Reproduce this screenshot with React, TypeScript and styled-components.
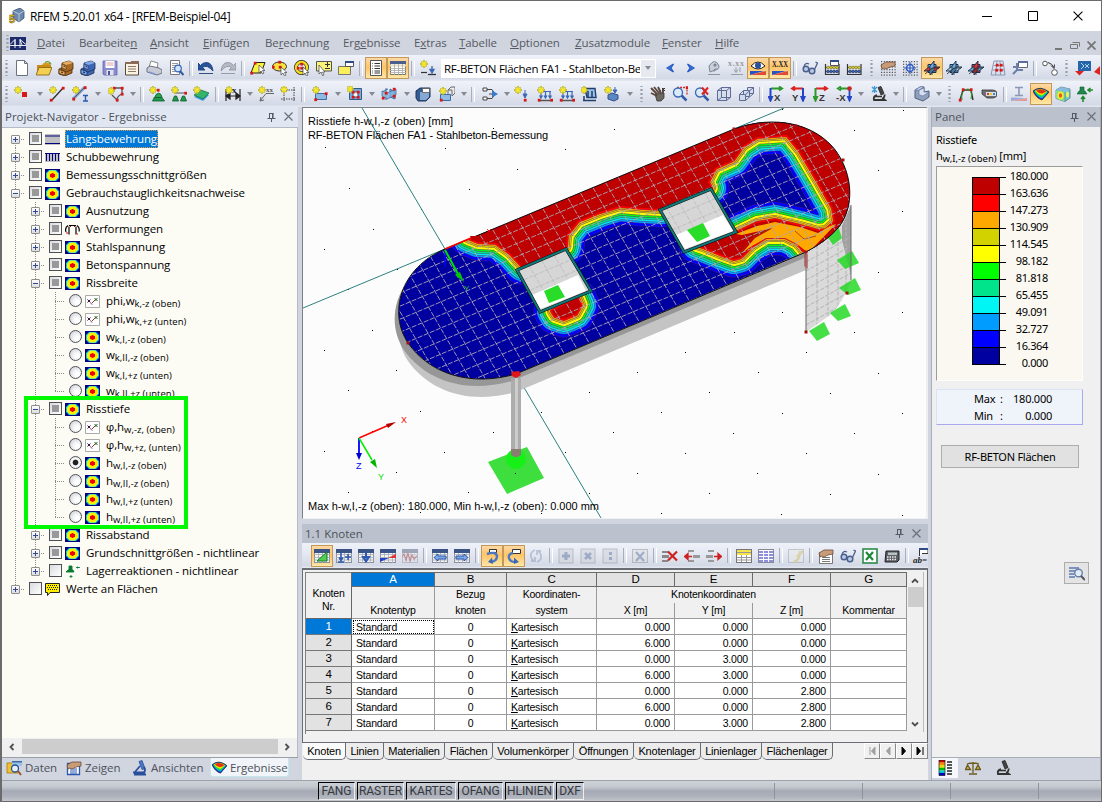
import React from "react";
import styled, { createGlobalStyle, css } from "styled-components";

const ui = `"Open Sans", "Noto Sans", sans-serif`;
const arial = `"Liberation Sans", Arial, sans-serif`;

const Global = createGlobalStyle`
  * { box-sizing: border-box; }
  body { margin: 0; background: #d0d5e0; overflow: hidden; }
  svg { display: block; flex: none; }
`;

const Window = styled.div`
  width: 1102px;
  height: 802px;
  display: flex;
  flex-direction: column;
  border: 1px solid #6b6b6b;
  border-left-width: 2px;
  background: #d0d5e0;
  font: 11.5px ${ui};
  color: #000;
  white-space: nowrap;
  overflow: hidden;
`;

const TitleBar = styled.div`
  height: 30px;
  flex: none;
  display: flex;
  align-items: center;
  background: #fff;
  padding-left: 6px;
`;
const TitleText = styled.div`
  font-size: 12px;
  letter-spacing: -0.31px;
  margin-left: 5px;
  flex: 1;
`;
const CaptionButtons = styled.div`
  display: flex;
  padding-right: 18px;
  gap: 35.5px;
  align-items: center;
`;

const MenuBar = styled.div`
  height: 24px;
  flex: none;
  display: flex;
  align-items: center;
  background: #d0d4de;
  padding-left: 3px;
  color: #555a63;
`;
const MenuGap = styled.div`
  width: 11px;
`;
const MenuItem = styled.div<{ $w: number }>`
  width: ${(p) => p.$w}px;
  font-size: 11.5px;
  line-height: 15px;
  padding-bottom: 1px;
  letter-spacing: -0.08px;
`;
const MdiButtons = styled.div`
  display: flex;
  gap: 7px;
  margin: 5px 5px 0 auto;
`;

const Bar = styled.div<{ $h?: number; $start?: number }>`
  height: ${(p) => p.$h ?? 26}px;
  flex: none;
  display: flex;
  align-items: center;
  padding-left: ${(p) => p.$start ?? 0}px;
  background: linear-gradient(#eff2f9, #e3e7f1 45%, #d3d9e6 90%, #e6e9f0);
  overflow: hidden;
`;
const Grip = styled.div<{ $w: number }>`
  width: ${(p) => p.$w}px;
  flex: none;
  height: 16px;
  background: radial-gradient(circle, #9a9ea8 1px, transparent 1.3px) center / 3px 4px no-repeat;
  background-repeat: no-repeat repeat;
`;
const Sep = styled.div<{ $w: number }>`
  width: ${(p) => p.$w}px;
  flex: none;
  display: flex;
  justify-content: center;
  &::after {
    content: "";
    width: 2px;
    height: 15px;
    border-left: 1px solid #a9aebb;
    border-right: 1px solid #fff;
  }
`;
const Drop = styled.div<{ $w: number }>`
  width: ${(p) => p.$w}px;
  flex: none;
  display: flex;
  justify-content: center;
  &::after {
    content: "";
    border: 3.5px solid transparent;
    border-top: 4px solid #858a93;
    border-bottom: 0;
  }
`;
const Tool = styled.div<{ $w: number; $on?: boolean; $dim?: boolean }>`
  width: ${(p) => p.$w}px;
  height: 22px;
  flex: none;
  display: flex;
  align-items: center;
  justify-content: center;
  ${(p) => p.$dim && css`svg { opacity: 0.45; filter: saturate(0.6); }`}
  ${(p) =>
    p.$on &&
    css`
      border: 1px solid #c2995a;
      background: linear-gradient(#fdd9a6, #ffc468 45%, #ffe7a6);
    `}
`;
const Combo = styled.div`
  width: 215px;
  height: 19px;
  margin: 0 4px 0 2px;
  flex: none;
  display: flex;
  background: #fff;
  align-items: center;
  padding-left: 3px;
`;
const ComboText = styled.div`
  width: 196px;
  margin-right: 1px;
  overflow: hidden;
  font-size: 11.5px;
  letter-spacing: -0.28px;
`;
const ComboArrow = styled.div`
  width: 14px;
  height: 17px;
  background: #e6e9f0;
  display: flex;
  align-items: center;
  justify-content: center;
`;

const Main = styled.div`
  flex: 1;
  display: flex;
  min-height: 0;
`;

const Nav = styled.div`
  width: 296px;
  flex: none;
  display: flex;
  flex-direction: column;
`;
const PanelHead = styled.div<{ $bg: string; $h: number; $pr?: number }>`
  height: ${(p) => p.$h}px;
  flex: none;
  display: flex;
  align-items: center;
  background: ${(p) => p.$bg};
  padding: 0 ${(p) => p.$pr ?? 4}px 1px 3px;
  font-size: 11.5px;
  color: #4d525b;
  letter-spacing: 0;
  gap: 8px;
`;
const Grow = styled.div`
  flex: 1;
`;
const TreeArea = styled.div`
  position: relative;
  flex: 1;
  min-height: 0;
  background: #fcfbf4;
  border-top: 1px solid #b5bac6;
  border-right: 1px solid #b5bac6;
  padding: 2px 0 0 3px;
`;
const Row = styled.div`
  height: 18px;
  display: flex;
  align-items: center;
`;
const Guide = styled.div<{ $v: "full" | "half" | "lower"; $h?: boolean }>`
  width: 20px;
  height: 18px;
  flex: none;
  display: flex;
  align-items: center;
  padding: 1px 0 0 6px;
  background:
    repeating-linear-gradient(#8a8a8a 0 1px, transparent 1px 2px) 10px ${(p) => (p.$v === "lower" ? "9px" : "0")} / 1px
      ${(p) => (p.$v === "full" ? "18px" : "10px")} no-repeat,
    ${(p) =>
      p.$h
        ? `repeating-linear-gradient(90deg, #8a8a8a 0 1px, transparent 1px 2px) 10px 9px / 14px 1px no-repeat`
        : "linear-gradient(transparent, transparent)"};
`;
const Expander = styled.div<{ $open?: boolean }>`
  width: 9px;
  height: 9px;
  border: 1px solid #8f8f8f;
  border-radius: 1px;
  background:
    linear-gradient(#2d489b, #2d489b) center / 5px 1px no-repeat,
    linear-gradient(#2d489b, #2d489b) center / ${(p) => (p.$open ? "0 0" : "1px 5px")} no-repeat,
    linear-gradient(#fff, #dcdcdc);
`;
const Check = styled.div<{ $filled?: boolean }>`
  width: 13px;
  height: 13px;
  flex: none;
  margin: -1px 3px 0 4px;
  border: 1px solid #4f5053;
  padding: 2px;
  background: linear-gradient(135deg, #d9dbe0, #fff);
  &::after {
    content: "";
    display: block;
    width: 7px;
    height: 7px;
    background: ${(p) => (p.$filled ? "#999" : "transparent")};
  }
`;
const Radio = styled.div<{ $on?: boolean }>`
  width: 13px;
  height: 13px;
  flex: none;
  margin: -1px 3px 0 4px;
  border: 1px solid #505256;
  border-radius: 50%;
  background: ${(p) =>
    p.$on
      ? "radial-gradient(circle, #222 0 2.4px, #fff 3.3px, #dfe2e6 6px)"
      : "radial-gradient(circle at 65% 65%, #fff 2px, #d3d7de 8px)"};
`;
const Label = styled.div<{ $sel?: boolean }>`
  margin-left: 5px;
  height: 18px;
  line-height: 17px;
  padding: 0 1px;
  font-size: 11.5px;
  letter-spacing: -0.08px;
  ${(p) => p.$sel && css`background: #0078d7; color: #fff; outline: 1px dotted #e49a4c; outline-offset: -1px;`}
`;
const Sub = styled.span`
  font-size: 9.5px;
  letter-spacing: 0.02px;
  position: relative;
  top: 2px;
`;
const Highlight = styled.div`
  position: absolute;
  left: 22px;
  top: 268px;
  width: 164px;
  height: 133px;
  border: 4px solid #00f800;
`;
const HScroll = styled.div`
  height: 19px;
  flex: none;
  display: flex;
  align-items: center;
  justify-content: space-between;
  background: #f0f0f0;
  border-right: 1px solid #b5bac6;
  padding: 0 6px 2px 6px;
`;
const HThumb = styled.div`
  width: 256px;
  height: 15px;
  background: #cdcdcd;
`;
const NavTabs = styled.div`
  height: 23px;
  flex: none;
  display: flex;
  border-top: 1px solid #9a9fa9;
  padding-left: 1px;
`;
const NavTab = styled.div<{ $w: number; $on?: boolean }>`
  width: ${(p) => p.$w}px;
  height: 19px;
  display: flex;
  align-items: center;
  gap: 3px;
  padding-left: 3px;
  color: #4d525b;
  letter-spacing: -0.05px;
  ${(p) => p.$on && css`background: #f1f4f8; border-radius: 0 0 3px 3px; border: 1px solid #c4e6ee; border-top: 0; padding-left: 1px;`}
`;

const Center = styled.div`
  width: 626px;
  margin-left: 4px;
  flex: none;
  display: flex;
  flex-direction: column;
`;
const View = styled.div`
  height: 412px;
  border: 1px solid #7b7f88;
  border-right: 2px solid #eef0f4;
  border-bottom: 1px solid #eef0f4;
  background: #fcfcfc;
`;
const TableHead = styled.div`
  margin-top: 5px;
`;
const Grid = styled.div`
  height: 175px;
  flex: none;
  border: 1px solid #6a6d74;
  border-top-width: 2px;
  background: #f0f0f0;
  padding: 2px 0 0 2px;
  display: flex;
  font: 10.5px ${arial};
`;
const Table = styled.div`
  width: 602px;
  height: 162px;
  display: grid;
  grid-template-columns: 46px 83px 72px 90px 78px 78px 78px 76px;
  grid-template-rows: 15px 16px 16px repeat(7, 16px);
  border-left: 1px solid #808080;
`;
const Cell = styled.div<{ $a?: string; $k?: "letter" | "head" | "num" | "sel" }>`
  border-right: 1px solid #9a9a9a;
  border-bottom: 1px solid #9a9a9a;
  background: #fff;
  text-align: ${(p) => p.$a ?? "left"};
  padding: 0 4px;
  line-height: 17px;
  height: 16px;
  letter-spacing: -0.2px;
  ${(p) => p.$k === "letter" && css`background: #e2e2e2; border: 1px solid #6a6a6a; border-left: 0; height: 15px; line-height: 13px; text-align: center; font-size: 11.5px;`}
  ${(p) => p.$k === "num" && css`background: #e2e2e2; text-align: center; line-height: 15px; font-size: 11.5px; border-bottom-color: #777; border-right-color: #666;`}
  ${(p) => p.$k === "sel" && css`outline: 1px dotted #000; outline-offset: -2px;`}
  ${(p) => p.$k === "head" && css`background: #f0f0f0; border-bottom: 0; text-align: center; padding: 0 1px; line-height: 14px;`}
`;
const Corner = styled(Cell)`
  grid-row: 1 / span 3;
  height: 47px;
  line-height: 13px;
  padding-top: 14px;
  text-align: center;
  background: #f0f0f0;
  border-top: 1px solid #808080;
  border-right-color: #666;
  border-bottom-color: #666;
`;
const Blue = styled(Cell)`
  background: #0078d7;
  color: #fff;
`;
const KoordHead = styled(Cell)`
  grid-column: span 3;
`;
const HeadBottom = styled(Cell)`
  border-bottom: 1px solid #9a9a9a;
`;
const VScroll = styled.div`
  width: 17px;
  height: 160px;
  display: flex;
  flex-direction: column;
  align-items: center;
  justify-content: space-between;
  padding: 5px 0 4px;
  border-right: 1px solid #bbb;
`;
const VThumb = styled.div`
  width: 15px;
  height: 20px;
  background: #cdcdcd;
  margin: -112px 0 0;
`;
const SheetTabs = styled.div`
  height: 19px;
  flex: none;
  display: flex;
  background: #f0f0f0;
  padding-left: 1px;
  font: 11px ${arial};
  letter-spacing: -0.2px;
`;
const Sheet = styled.div<{ $w: number; $on?: boolean }>`
  width: ${(p) => p.$w}px;
  height: 17px;
  line-height: 17px;
  text-align: center;
  border: 1px solid #6a6d74;
  border-top: 0;
  border-left: 0;
  border-radius: 0 0 5px 5px;
  background: ${(p) => (p.$on ? "#fafafa" : "#ececec")};
`;
const PageButton = styled.div`
  width: 16px;
  height: 16px;
  background: #f0f0f0;
  border: 1px solid;
  border-color: #fff #8a8a8a #8a8a8a #fff;
  display: flex;
  align-items: center;
  justify-content: center;
`;
const Filler = styled.div`
  flex: 1;
  background: #f0f0f0;
`;

const Side = styled.div`
  flex: 1;
  margin-left: 3px;
  display: flex;
  flex-direction: column;
  background: #f0f0f0;
  border-left: 1px solid #a9adb7;
  border-right: 1px solid #a9adb7;
`;
const SideBody = styled.div`
  flex: 1;
  padding: 5px 4px 0 4px;
  font: 11px "Noto Sans", ${ui};
  letter-spacing: -0.25px;
`;
const SideLine = styled.div`
  height: 16px;
  line-height: 16px;
`;
const Legend = styled.div`
  width: 147px;
  height: 215px;
  margin-top: 2px;
  background: #faf8f0;
  border: 1px solid #9b9b9b;
  border-right-color: #fff;
  border-bottom-color: #fff;
  display: flex;
  padding: 10px 0 0 35px;
`;
const Swatches = styled.div`
  border: 1px solid #000;
  width: 28px;
  height: 188px;
`;
const Swatch = styled.div<{ $c: string }>`
  height: 17px;
  width: 26px;
  background: ${(p) => p.$c};
  border-bottom: 1px solid #000;
  position: relative;
  &::after {
    content: "";
    position: absolute;
    left: 26px;
    top: 16px;
    width: 7px;
    height: 1px;
    background: #000;
  }
  &:first-child::before {
    content: "";
    position: absolute;
    left: 26px;
    top: -1px;
    width: 7px;
    height: 1px;
    background: #000;
  }
`;
const Values = styled.div`
  width: 48px;
  margin-top: -10px;
  text-align: right;
  letter-spacing: -0.35px;
`;
const Value = styled.div`
  height: 17px;
  line-height: 17px;
`;
const MinMax = styled.div`
  width: 147px;
  height: 36px;
  margin-top: 8px;
  padding: 1px 30px 0 37px;
  background: #eff3fa;
  border: 1px solid #dbe3f3;
  border-right-color: #a9a9f0;
  border-bottom-color: #a9a9f0;
`;
const MinMaxRow = styled.div`
  display: flex;
  height: 17px;
  line-height: 16px;
  span:first-child { width: 26px; }
  span:last-child { flex: 1; text-align: right; }
`;
const PushButton = styled.div`
  width: 138px;
  height: 23px;
  margin: 20px 0 0 5px;
  border: 1px solid #adadad;
  background: #e1e1e1;
  text-align: center;
  line-height: 21px;
`;
const DetailButton = styled.div`
  width: 25px;
  height: 22px;
  margin: 94px 0 0 128px;
  border: 1px solid #adadad;
  background: #e4e4e4;
  display: flex;
  align-items: center;
  justify-content: center;
`;
const SideTabs = styled.div`
  height: 23px;
  flex: none;
  display: flex;
  align-items: flex-start;
  background: #d0d5e0;
  border-top: 1px solid #a9adb7;
`;
const SideTab = styled.div<{ $on?: boolean }>`
  width: ${(p) => (p.$on ? 26 : 30)}px;
  height: 20px;
  display: flex;
  align-items: center;
  justify-content: center;
  background: ${(p) => (p.$on ? "#f6f8fb" : "transparent")};
`;

const Status = styled.div`
  height: 21px;
  flex: none;
  display: flex;
  background: linear-gradient(#ced2d9, #c3c7ce 30%, #a6aab4 50%, #adb1bb 75%, #c2c5cc);
  border-top: 1px solid #9da1aa;
  padding-left: 316px;
  font: 12px Roboto, ${arial};
  letter-spacing: -0.1px;
  color: #35383e;
`;
const StatusCell = styled.div<{ $w: number }>`
  width: ${(p) => p.$w}px;
  height: 18px;
  margin: 1px 2px 0 0;
  line-height: 17px;
  text-align: center;
  border: 1px solid #000;
  border-right-color: #eee;
  border-bottom-color: #eee;
`;
const StatusTick = styled.div<{ $w: number }>`
  width: ${(p) => p.$w}px;
  height: 16px;
  margin-top: 2px;
  border-right: 1px solid #8f939c;
`;

/* ---------- icons ---------- */

const star = (x = 4, y = 4) => (
  <g key={`s${x}-${y}`}>
    <path
      d={`M${x} ${y - 4}v8M${x - 4} ${y}h8M${x - 2.5} ${y - 2.5}l5 5M${x + 2.5} ${y - 2.5}l-5 5`}
      stroke="#a79a1a"
      strokeWidth="1.5"
    />
    <path
      d={`M${x} ${y - 3.4}v6.800M${x - 3.4} ${y}h6.800M${x - 2} ${y - 2}l4 4M${x + 2} ${y - 2}l-4 4`}
      stroke="#f6ea2c"
      strokeWidth="1.100"
    />
  </g>
);
const dot = (x: number, y: number, c = "#d81818") => <rect key={`${x}-${y}`} x={x - 1.2} y={y - 1.2} width="2.8" height="2.8" fill={c} />;
const tableBase = (
  <>
    <rect x=".5" y="2.5" width="15" height="12" fill="#f4f4f4" stroke="#8a8f99" />
    <path d="M0 6.5h16M0 9.5h16M0 12h16M4.5 3v12M8.5 3v12M12.5 3v12" stroke="#a5aab4" strokeWidth=".8" />
    <path d="M0 1h16v4H0z" fill="#3a5488" />
  </>
);
const gridDots = Array.from({ length: 36 }, (_, i) => (
  <rect key={i} x={1 + (i % 6) * 2.7} y={1 + Math.floor(i / 6) * 2.7} width="1.2" height="1.2" fill="#555" />
));
const planes = (front: string, flat: string) => (
  <>
    <path d="M4 4.500h8v8H4z" fill={front} stroke="#16324f" />
    <path d="M0 11l5-4h11l-5 4z" fill={flat} stroke="#16324f" strokeWidth=".9" />
    <path d="M6 6l4-5v9l-4 5z" fill={front} stroke="#16324f" strokeWidth=".9" />
    <path d="M8 8h7M8 8v7M8 8L1 14" stroke="#222" strokeWidth=".8" />
  </>
);
const cabinet = (a: string, b: string, c: string) => (
  <>
    <path d="M1 9l7-3 6 2v5l-7 3-6-2z" fill={b} stroke={c} strokeWidth=".8" />
    <path d="M4 3l7-2 4 2v6l-7 3-4-2z" fill={b} stroke={c} strokeWidth=".8" />
    <path d="M4 3l7-2 4 2-7 2z" fill={a} />
    <path d="M4 4l4 1.500v4L4 8z" fill={a} stroke={c} strokeWidth=".6" />
    <path d="M1 9.500l6 2v4l-6-2z" fill={a} stroke={c} strokeWidth=".8" />
    <path d="M3 12l2 .7M5.500 6l1.500.5" stroke={c} strokeWidth="1.300" />
  </>
);
const axisIcon = (label: string, flip: boolean, h: string, v: string) => (
  <>
    <path d={flip ? "M13 2.500H3M5 .5L2 2.500l3 2" : "M3 2.500h10M11 .5l3 2-3 2"} stroke={h} strokeWidth="2" />
    <path d={flip ? "M13 2v11M11.500 11l1.500 3.500 1.500-3.500z" : "M2.500 2v11M1 11l1.500 3.500L4 11z"} stroke={v} strokeWidth="2" fill={v} />
    <text x={flip ? 2 : 6} y="14.500" fontSize="9.500" fontWeight="bold" fontFamily="Liberation Sans" fill="#333" stroke="none">
      {label}
    </text>
  </>
);
const abacus = (
  <>
    <path d="M1.500 4v11M15 4v11M1 14.500h14.500" stroke="#333" strokeWidth="1.200" />
    <path d="M2 7.500h13M2 11.500h13" stroke="#555" />
    {[4, 7, 10, 13].map((x) => (
      <React.Fragment key={x}>
        <circle cx={x} cy="7.500" r="1.400" fill="#e3d21a" stroke="#554" strokeWidth=".5" />
        <circle cx={x} cy="11.500" r="1.400" fill="#3b68b5" stroke="#224" strokeWidth=".5" />
      </React.Fragment>
    ))}
  </>
);
const lens = (
  <>
    <path d="M9.500 9.500l5 5" stroke="#2e5ca8" strokeWidth="2.500" />
    <circle cx="6" cy="6.500" r="4.500" fill="#d7ebfb" fillOpacity=".8" stroke="#3b68b5" strokeWidth="1.300" />
  </>
);
const hand = <path d="M1 5l5-3 9 0v4l-5 1-4 2-2-1-2 1z" fill="#c99c78" stroke="#6b4a36" strokeWidth=".8" />;
const rainbow = (
  <>
    <path d="M0 5q7-6 16 1l-7 8q-6-2-9-9z" fill="#1030c8" />
    <path d="M1 5q7-5 14 1l-6 6.500q-5-1.500-8-7.500z" fill="#0bd" />
    <path d="M1.500 5q6-4.500 13 .8l-5.500 5.200q-5-1.500-7.500-6z" fill="#2d3" />
    <path d="M2 4.800q6-4 12 .8L9 9.500Q4.500 8.500 2 4.800z" fill="#ee0" />
    <path d="M3 4.500q5-3 10.500 1L9 7.800Q5 7 3 4.500z" fill="#e53010" />
    <path d="M0 5q7-6 16 1l-7 8q-6-2-9-9z" stroke="#223" strokeWidth=".7" />
  </>
);
const loads = (
  <>
    <path d="M3 5.500h11M4 6v5M8.500 6v5M13 6v5M2.500 9.500L4 12l1.500-2.500M7 9.500L8.500 12 10 9.500M11.500 9.500L13 12l1.500-2.500" stroke="#3b68b5" strokeWidth="1.200" />
    <path d="M2 14.500h13" stroke="#555" strokeWidth="1.500" />
    {dot(2, 14)}
    {dot(14.500, 14)}
    {star(4, 4)}
  </>
);
const member = (
  <>
    <path d="M5 2v12M1 6l6-3M9 3l5 3v7l-5-2z" stroke="#3c6ea5" fill="#7fb2dd" />
    <path d="M1 5l5 2 9-4v6l-9 4-5-3z" fill="#7fb2dd" fillOpacity=".8" stroke="#3c6ea5" strokeWidth=".8" />
    {dot(2, 12)}
    {dot(13, 3)}
    {dot(5, 7)}
    {dot(13, 10)}
  </>
);
const microscope = (
  <>
    <path d="M7 1.500l3-1 3 7-3 1.500z" fill="#444" stroke="#222" strokeWidth=".8" />
    <path d="M6 9q-4 1-3 5h11l-2-1.500q2-2 1.500-4" stroke="#333" strokeWidth="1.800" />
    <path d="M4 10.500h7" stroke="#333" strokeWidth="1.600" />
  </>
);

const icons: Record<string, React.ReactNode> = {
  page: <path d="M2.500.5h8l3 3v12h-11zM10.500.5v3h3" fill="#fff" stroke="#6d7280" />,
  open: (
    <>
      <path d="M1 5h5l1.500-2H14v4H1z" fill="#d99b1c" />
      <path d="M1 5v10l2-7h12V5" fill="#c98a18" />
      <path d="M0 15l3-7.500h13L13 15z" fill="#f3d052" stroke="#8c6a15" strokeWidth=".9" />
      <path d="M9 2.500q4-2.500 6 2" stroke="#5a9a3a" strokeWidth="1.300" />
    </>
  ),
  cabBrown: cabinet("#e3ac62", "#a86a25", "#4e2f10"),
  cabBlue: cabinet("#7fa8e6", "#3c66b4", "#1b2e5a"),
  save: (
    <>
      <path d="M1 1h14v14H2l-1-1z" fill="#8a8cd0" stroke="#6668a8" strokeWidth=".8" />
      <path d="M3.500 1h9v7h-9z" fill="#fff" />
      <path d="M4.500 3h7M4.500 5h7" stroke="#e0a0a0" />
      <path d="M4.500 10h7v5h-7z" fill="#e2e2ea" />
      <path d="M6 11h2v4H6z" fill="#54568f" />
    </>
  ),
  note: (
    <>
      <path d="M1.500 2.500h13v12.500h-13z" fill="#fbf3df" stroke="#5a4a40" />
      <path d="M1 2h6v-1h8v3H1z" fill="#8a6c58" />
      <path d="M4 6.500h8M4 9h8M4 11.500h8" stroke="#8a7a70" />
    </>
  ),
  print: (
    <>
      <path d="M3 7l2-6 7 2-1 6z" fill="#fff" stroke="#888" />
      <path d="M1 8l3-2 9 2 3 2v3l-5 2-10-3z" fill="#c9ccd6" stroke="#6d7280" />
      <path d="M3 12l6 2" stroke="#7d9bd0" strokeWidth="1.500" />
    </>
  ),
  preview: (
    <>
      <path d="M2.500.5h9v14h-9z" fill="#fff" stroke="#777" />
      <path d="M4 3.500h6M4 5.500h6M4 7.500h3M4 9.500h3M4 11.500h3" stroke="#999" />
      <circle cx="10" cy="8.500" r="3.300" fill="#cfe6fa" stroke="#3b68b5" strokeWidth="1.200" />
      <path d="M12 11l3.500 4" stroke="#2e5ca8" strokeWidth="2" />
    </>
  ),
  undo: <path d="M0 3v7h7L4.500 7.500Q9 4 15 11 14 2 7.500 2.500 4.500 3 2.500 5.500zM1 13.500h14" fill="#27549b" stroke="#1c3f7a" strokeWidth=".9" />,
  redo: <path d="M16 3v7H9l2.500-2.500Q7 4 1 11 2 2 8.500 2.500q3 .5 5 3zM1 13.500h14" fill="#b4b9c4" stroke="#8f95a2" strokeWidth=".9" />,
  para: (
    <>
      <path d="M5 2.500h10L11 13H1z" fill="#fbf23c" stroke="#222" />
      <path d="M9 5v8l2-2 1.500 3 1.500-1-1.500-2.500H15z" fill="#fff" stroke="#444" strokeWidth=".7" />
      {dot(5, 3)}{dot(1.500, 13)}
    </>
  ),
  ell: (
    <>
      <ellipse cx="7.500" cy="6.500" rx="7" ry="4.500" fill="#fbe23c" stroke="#333" />
      {dot(7.500, 2)}{dot(1, 7)}{dot(8, 7)}
      <path d="M9 7v8l2-2 1.500 3 1.500-1-1.500-2.500H15z" fill="#fff" stroke="#444" strokeWidth=".7" />
    </>
  ),
  ring: (
    <>
      <circle cx="7.500" cy="7.500" r="5.500" stroke="#222" strokeWidth="3.800" />
      <circle cx="7.500" cy="7.500" r="5.500" stroke="#f5e01a" strokeWidth="2.400" />
      {dot(7.500, 4)}{dot(7.500, 8)}{dot(4, 8)}
      <path d="M9 7v8l2-2 1.500 3 1.500-1-1.500-2.500H15z" fill="#fff" stroke="#444" strokeWidth=".7" />
    </>
  ),
  rectpm: (
    <>
      <path d="M.5 1.500h15v9.500H.5z" fill="#fbf27a" stroke="#555" />
      <path d="M9 4.500h5M11.500 2v5M9 8.500h5" stroke="#333" />
      <path d="M3 5v9l2-2 1.500 3.500L8 15l-1.500-3H9z" fill="#fff" stroke="#444" strokeWidth=".7" />
    </>
  ),
  wins: (
    <>
      <path d="M.5 6.500h12v8H.5z" fill="#fbee5c" stroke="#777" />
      <path d="M7.500 1.500h8v5h-8z" fill="#fff" stroke="#555" />
      <path d="M7 1h9v2H7z" fill="#2f4c86" />
    </>
  ),
  list: (
    <>
      <path d="M2.500.5h11v15h-11z" fill="#fff" stroke="#555" />
      <path d="M4 3.500h1M4 6h1M4 8.500h1M4 11h1M4 13h1" stroke="#777" strokeWidth="1.200" />
      <path d="M6.500 3.500h5.500M6.500 6h5.500M6.500 8.500h5.500M6.500 11h5.500M6.500 13h5.500" stroke="#333" />
    </>
  ),
  table: (
    <>
      <path d="M.5 1.500h15v13H.5z" fill="#fff" stroke="#776" />
      <path d="M0 1h16v3H0z" fill="#4a5f8e" />
      <path d="M0 4.500h16v2H0z" fill="#e9dcc0" />
      <path d="M0 8.500h16M0 10.500h16M0 12.500h16M4.500 4v11M8.500 4v11M12.500 4v11" stroke="#aaa" strokeWidth=".8" />
    </>
  ),
  loadStar: (
    <>
      <path d="M8 14.500h8" stroke="#333" strokeWidth="1.300" />
      <path d="M12 6v5M10 9.500l2 3.500 2-3.500z" stroke="#3b68b5" fill="#3b68b5" strokeWidth="1.300" />
      <path d="M1 12.500h6" stroke="#333" strokeWidth="1.200" />
      {star(4, 4)}
    </>
  ),
  prev: <path d="M11.500 4L5 8l6.500 4L9 8z" fill="#3b78e0" stroke="#2a5cc4" strokeWidth="1.200" />,
  next: <path d="M4.500 4L11 8l-6.500 4L7 8z" fill="#3b78e0" stroke="#2a5cc4" strokeWidth="1.200" />,
  eyeGrey: (
    <>
      <path d="M2 14.500h12M8 11l-3-2h6z" stroke="#8d93a0" strokeWidth="1.200" />
      <path d="M3 6q6-9 10 0 0 4-4 3-1 2-5 3z" fill="#c9ced9" stroke="#7b8596" />
      <circle cx="9" cy="5" r="1.600" fill="#7b8596" />
    </>
  ),
  xxGrey: (
    <>
      <text x="0" y="5.500" fontSize="8" fontFamily="Liberation Serif" fontWeight="bold" fill="#999" textLength="16">x.xx</text>
      <path d="M3 14.500h12M8 7v5M6 9.500l2 3 2-3M12 7v5" stroke="#9a9faa" />
    </>
  ),
  eye: (
    <>
      <path d="M0 15L16 11v4z" fill="#e04a3a" />
      <path d="M0 11h14L0 15z" fill="#2b50c0" />
      <path d="M1 6q7-8 14 0-7 6-14 0z" fill="#fff" stroke="#222" />
      <circle cx="8" cy="5.500" r="3" fill="#28509c" />
    </>
  ),
  xx: (
    <>
      <text x="0" y="7" fontSize="9" fontFamily="Liberation Serif" fontWeight="bold" fill="#222" textLength="16" lengthAdjust="spacingAndGlyphs">X.XX</text>
      <path d="M0 15L16 11v4z" fill="#e04a3a" />
      <path d="M0 11h14L0 15z" fill="#2b50c0" />
    </>
  ),
  glasses: (
    <>
      <circle cx="4" cy="9" r="2.800" stroke="#4b5f8c" strokeWidth="1.500" fill="#b8c8e6" />
      <circle cx="10" cy="11" r="2.800" stroke="#4b5f8c" strokeWidth="1.500" fill="#b8c8e6" />
      <path d="M2 7q1-5 5-3M12.500 9.500L15.500 3l-2-1" stroke="#4b5f8c" strokeWidth="1.300" />
    </>
  ),
  abacus,
  abacusWin: (
    <>
      {abacus}
      <path d="M6.500.5h8v5h-8z" fill="#fff" stroke="#555" />
      <path d="M6 0h9v2H6z" fill="#2f4c86" />
    </>
  ),
  handGrid: <>{gridDots}{hand}</>,
  target: (
    <>
      {gridDots}
      <circle cx="8" cy="8" r="3.300" stroke="#2b58c0" fill="#dfe8fa" strokeWidth="1.300" />
      <path d="M8 2v12M2 8h12" stroke="#2b58c0" strokeWidth="1.200" />
    </>
  ),
  pl1: planes("#6fa9dd", "#e33030"),
  pl2: planes("#6fa9dd", "#a9cdec"),
  pl3: planes("#e33030", "#6fa9dd"),
  redGrid: (
    <>
      <path d="M4 1h9l2 14H1zM3.500 5.500h10.500M2.500 10h12M7 1L5.500 15M10 1l.5 14" stroke="#8a97b5" />
      {dot(7, 5)}{dot(11, 5)}{dot(6.500, 10)}{dot(11, 10)}
    </>
  ),
  winAxis: (
    <>
      <path d="M6.500 1.500h9v6h-9z" fill="#fff" stroke="#667" />
      <path d="M6 1h10v2H6z" fill="#5b6f9c" />
      <path d="M1 7h4V3M5 7v3l-4 4M5 10h6" stroke="#6b7fac" strokeWidth="2" />
    </>
  ),
  shapes: (
    <>
      <circle cx="3" cy="3.500" r="2.300" stroke="#555" fill="#fff" />
      <circle cx="12.500" cy="12.500" r="2.800" stroke="#555" fill="#fff" />
      <path d="M6 2.500q4 1 6 5M9 5.500l3 3 .5-4" stroke="#333" />
    </>
  ),
  blueBox: (
    <>
      <path d="M3 1h13v10H3z" fill="#2466a8" />
      <path d="M6 3l3 3-3 3M10 4l4 4M14 4l-4 4" stroke="#bfe6f8" strokeWidth=".9" />
      <path d="M0 11h9l-4.500 4.500z" fill="#d22" />
    </>
  ),
  redHalf: <path d="M4 12L10 6v9z" fill="#d22" />,
  node: <>{star(4, 4)}<path d="M8 6h5v5H8z" fill="#d81818" /></>,
  line: (
    <>
      <path d="M3 14L14 2" stroke="#333" strokeWidth="1.400" />
      {dot(2, 14)}{dot(14, 2)}{star(4, 4)}
    </>
  ),
  lineI: (
    <>
      <path d="M1 13L13 1" stroke="#7f9fcc" strokeWidth="3" />
      <path d="M1 13L13 1" stroke="#444" strokeWidth=".7" />
      <path d="M11 9.500h5M13.500 10v5M11 15h5" stroke="#2b58b0" strokeWidth="1.400" />
      {dot(1.500, 13)}{dot(13, 1.500)}{star(4, 4)}
    </>
  ),
  poly: (
    <>
      <path d="M6 2h8v6q-5 2-5 6L4 9" stroke="#555" strokeWidth="1.300" />
      {dot(6, 2)}{dot(14, 2)}{dot(14, 8)}{dot(9, 14)}{star(3, 5)}
    </>
  ),
  support: (
    <>
      <path d="M3.500 15l2-4h7l3 4z" fill="#1f9a4c" stroke="#0c5a2a" strokeWidth=".8" />
      <path d="M7 8.500q3-3 5 0l1 3H6z" fill="#27a857" stroke="#0c5a2a" strokeWidth=".8" />
      {dot(9, 4)}{star(4, 4)}
    </>
  ),
  supports: (
    <>
      <path d="M4 7h11" stroke="#555" />
      {dot(14.500, 7)}
      <path d="M1.500 15l2-5h2l2 5zM9.500 15l2-5h2l2 5z" fill="#1f9a4c" stroke="#0c5a2a" strokeWidth=".8" />
      {star(4, 4)}
    </>
  ),
  slabs: (
    <>
      <path d="M1 11l7-5 8 3-6 6z" fill="#3a9fd8" />
      <path d="M1 9l7-5 8 3-6 6z" fill="#35b56a" stroke="#0c6a3a" strokeWidth=".7" />
      {star(4, 4)}
    </>
  ),
  dim: (
    <>
      <path d="M1 3v12M15 3v12" stroke="#333" strokeWidth="1.300" />
      <path d="M2 10h12M5 7l-4 3 4 3zM11 7l4 3-4 3z" stroke="#222" fill="#222" strokeWidth="1.200" />
      {star(4, 4)}
      <text x="7" y="6.500" fontSize="9" fontWeight="bold" fontFamily="Liberation Serif" fill="#222">x</text>
    </>
  ),
  cmt: (
    <>
      <path d="M2 15L8 7.500h8M2 15l1-4M2 15l4-1" stroke="#666" />
      {star(4, 4)}
      <text x="8" y="6" fontSize="7" fontWeight="bold" fontFamily="Liberation Serif" fill="#555">xx</text>
    </>
  ),
  crop: (
    <>
      <path d="M4 1v14M14 1v14M1 4h15M1 13h15" stroke="#444" strokeDasharray="1.500 1" />
      {star(4, 3.500)}
    </>
  ),
  surf: (
    <>
      <path d="M3.500 7.500h11v6h-11z" fill="#8fbbe3" stroke="#3c6ea5" />
      {dot(14, 7.500)}{dot(3.500, 13.500)}{star(4, 4)}
    </>
  ),
  opening: (
    <>
      <path d="M2.500 2.500h12v11h-12z" fill="#7da9d4" stroke="#2f5a8c" />
      <path d="M6 6h5v5H6z" fill="#fff" stroke="#2f5a8c" />
      {dot(6, 6)}{dot(11, 6)}{dot(6, 11)}{dot(11, 11)}{star(3, 3)}
    </>
  ),
  member,
  solid: (
    <>
      <path d="M1 5l4-3h10v9l-4 4H3l-2-3z" fill="#335d92" stroke="#1d3557" />
      <path d="M5 6h9v5l-3 3H5z" fill="#86a8d2" />
      <path d="M7.500 2.500h7v4h-7z" fill="#fff" stroke="#555" strokeWidth=".8" />
    </>
  ),
  boxes: (
    <>
      <path d="M9 4l3-3h4v6l-3 3V4H9v5" stroke="#666" fill="#eee" />
      <path d="M1.500 8.500h10v6h-10z" fill="#8fbbe3" stroke="#3c6ea5" />
      {dot(2, 14)}{star(4, 5)}
    </>
  ),
  combine: (
    <>
      <path d="M1 2h4v3H1zM1 11h4v3H1z" stroke="#444" fill="#fff" />
      <path d="M5 3.500h5l2 3M5 12.500h5l2-3M7 8h3" stroke="#444" />
      <path d="M10 4.500v7L16 8z" fill="#3b78c8" />
    </>
  ),
  nload: (
    <>
      <path d="M11 4v7M9 8l2 4 2-4z" stroke="#3b68b5" fill="#3b68b5" />
      {dot(11, 14)}{star(4, 4)}
    </>
  ),
  loads,
  sload: (
    <>
      <path d="M4 2.500h10l1 9H6z" fill="#9cc3e6" stroke="#1f3f70" strokeWidth="1.400" />
      <path d="M7 5v6M11 5v6M2 14.500h13M3 10v4" stroke="#1f3f70" strokeWidth="1.500" />
      {star(3, 4)}
    </>
  ),
  gload: (
    <>
      <path d="M4 9l4-2 6 2v4l-4 2-6-2z" fill="#5b88c4" stroke="#2d4f86" />
      <path d="M11 1v5M9 4l2 3 2-3z" stroke="#3b68b5" fill="#3b68b5" />
      {star(4, 4)}
    </>
  ),
  handDark: (
    <>
      <path d="M5 8l9-1v5l-3 3H7z" fill="#6b6660" stroke="#3a342e" strokeWidth=".8" />
      <path d="M1 2l6 6M4 1l5 6M8 1l3 6M1 7l6 3M13 2v6" stroke="#5a463c" strokeWidth="1.900" />
      <path d="M12 2l3 3M12 5l3-3" stroke="#333" />
    </>
  ),
  zoomWin: (
    <>
      <path d="M5 1.500h10v8" stroke="#c33" strokeDasharray="2 1" strokeWidth="1.300" />
      {lens}
      {dot(15, 1.500)}
    </>
  ),
  zoomX: (
    <>
      {lens}
      <path d="M8 1.500l6 7M14 1.500l-6 7" stroke="#d22" strokeWidth="2" />
    </>
  ),
  cube: <path d="M1.500 4.500h9v10h-9zM1.500 4.500l4-3h9v10l-4 3M10.500 4.500l4-3M5.500 1.500v10h9M5.500 11.500l-4 3" stroke="#5d6c94" fill="#c9d3ea" fillOpacity=".5" />,
  cubes: <path d="M1.500 8.500h6v6h-6zM5.500 8V4.500h6v6h-4M9.500 4V1.500h6v6h-4M1.500 8.500l4-4M7.500 8.500l8-7M7.500 14.500l8-7" stroke="#5d6c94" fill="#c9d3ea" fillOpacity=".6" />,
  ax: axisIcon("X", false, "#2a9a2a", "#2444c8"),
  ay: axisIcon("Y", true, "#d22", "#2444c8"),
  az: axisIcon("Z", false, "#d22", "#2a9a2a"),
  amx: (
    <>
      <path d="M12 2.500H4M5 .5L2 2.500l3 2" stroke="#2a9a2a" strokeWidth="2" />
      <path d="M13.500 3v11M12 11l1.500 3.500L15 11z" stroke="#2444c8" strokeWidth="1.800" />
      <circle cx="13.500" cy="2.500" r="2.300" fill="#c22" />
      <text x="0" y="14.500" fontSize="9.500" fontWeight="bold" fontFamily="Liberation Sans" fill="#333">-X</text>
    </>
  ),
  micro: (
    <>
      {microscope}
      <path d="M1 1l5 5M6 1L1 6M3.500 0v7" stroke="#3b9ad8" strokeWidth="1.300" />
    </>
  ),
  angle: (
    <>
      <path d="M1 4l5-3h4v5l5-1v6l-6 4-8-3z" fill="#8fa0bd" stroke="#4f6080" />
      <path d="M1 4l5-3h4L5 4zM5 4v5l4 1 6-4-5 0V2z" fill="#d5deec" stroke="#5b6f9c" strokeWidth=".6" />
    </>
  ),
  frame: (
    <>
      <path d="M2 14L5 4h8l2 10" stroke="#333" strokeWidth="1.400" />
      <path d="M4 14Q3 7 6 5q4-4 7 0 1 4 0 8" stroke="#2a9a2a" />
      {dot(5, 3.500)}{dot(13, 3.500)}{dot(2, 14)}
    </>
  ),
  gray: (
    <>
      <path d="M1 4h10q5 0 5 4t-5 4H6L1 8z" fill="#6c6f76" stroke="#333" strokeWidth=".8" />
      <path d="M5 6h10v4H5z" fill="#ddd" />
      <path d="M6 7h2v2H6z" fill="#d33" />
      <path d="M9 7h2v2H9z" fill="#e3d21a" />
      <path d="M12 7h2v2h-2z" fill="#38d" />
    </>
  ),
  ibeam: (
    <>
      <path d="M4 1.500h8M8 2v7M4 9.500h8" stroke="#8a97b5" strokeWidth="1.600" />
      <path d="M0 15l16-3v3z" fill="#e59a94" />
      <path d="M0 11.500l14 .5-14 3z" fill="#9aa8da" />
    </>
  ),
  rainbow,
  rcube: (
    <>
      <path d="M1 4l5-3 9 2v9l-5 3.500-9-3z" fill="#6cc" stroke="#578" strokeWidth=".8" />
      <path d="M1 4l9 2v9.500l-9-3z" fill="#8d8" />
      <path d="M1 4l5-3 9 2-5 3z" fill="#8bd" />
      <ellipse cx="5.500" cy="9.500" rx="3.200" ry="4" fill="#ee3" />
      <ellipse cx="5.500" cy="9.500" rx="1.600" ry="2.200" fill="#e52" />
      <ellipse cx="12.500" cy="8.500" rx="1.500" ry="3" fill="#ee6" />
      <path d="M10 6v9.500" stroke="#578" strokeWidth=".6" />
    </>
  ),
  react: (
    <>
      <path d="M0 8l2-3h1V1h4v4h1l2 3z" fill="#1f8a4c" stroke="#0c5a2a" strokeWidth=".6" />
      <path d="M16 4h-4M13.500 2L11 4l2.500 2M6 16v-5M4 13L6 10.500 8 13" stroke="#1f8a2c" strokeWidth="1.600" />
    </>
  ),
  tTri: <>{tableBase}<path d="M3 13L13 4v9z" fill="#4fd04f" stroke="#1a7a2a" /></>,
  tPlus: <>{tableBase}<path d="M5 5v7M3 9.500l2 3 2-3M2 14h6M9 9h6M12 6v6" stroke="#2b58b0" strokeWidth="1.500" /></>,
  tDown: <>{tableBase}<path d="M8 4v6M5 9l3 4.500 3-4.500z" fill="#5b88c4" stroke="#2b58b0" strokeWidth="2" /></>,
  tDiag: <>{tableBase}<path d="M0 14L16 6v4L8 10z" fill="#d33" /><path d="M0 10h9L0 14z" fill="#2444c8" /></>,
  tWave: <>{tableBase}<path d="M0 9l2-3 2 6 2-7 2 8 2-6 2 4 3-3" stroke="#c22" strokeWidth="1.300" /></>,
  tLeft: <>{tableBase}<path d="M6 6L2 9.500 6 13v-2h8V8H6z" fill="#7fa8e6" stroke="#2b58b0" /></>,
  tRight: <>{tableBase}<path d="M10 6l4 3.500-4 3.500v-2H2V8h8z" fill="#7fa8e6" stroke="#2b58b0" /></>,
  goR: (
    <>
      <path d="M5.500 1.500h7v3h-7z" fill="#fff" stroke="#333" />
      <path d="M3 6q9-3 10 2 0 5-6 6" stroke="#4b78c0" strokeWidth="2.400" />
      <path d="M8 9.500l-4 4.500 5 2z" fill="#3b68b5" />
    </>
  ),
  goL: (
    <>
      <path d="M6.500 1.500h8v4h-8z" fill="#fff" stroke="#333" />
      <path d="M7 5Q2 6 3 10q1 4 6 4" stroke="#4b78c0" strokeWidth="2.400" />
      <path d="M8 9.500l5 4.500-5 2z" fill="#3b68b5" />
    </>
  ),
  sync: <path d="M7 2Q2 4 3 9q1 3 3 4M3 13h4V9M9 14q5-2 4-7-1-3-3-4M13 3H9v4" stroke="#7c97c9" strokeWidth="1.800" />,
  mPlus: <><rect x="1" y="1" width="14" height="14" fill="#ccd0da" stroke="#888" /><path d="M8 4v8M4 8h8" stroke="#3b68b5" strokeWidth="3" /></>,
  mX: <><rect x="1" y="1" width="14" height="14" fill="#ccd0da" stroke="#888" /><path d="M5 5l6 6M11 5l-6 6" stroke="#3b68b5" strokeWidth="2.500" /></>,
  mDots: <><rect x="1" y="1" width="14" height="14" fill="#ccd0da" stroke="#888" /><path d="M7 4h3v3H7zM7 9h3v3H7z" fill="#3b68b5" /></>,
  tX: <><rect x=".5" y="1.500" width="15" height="13" fill="#ddd" stroke="#888" /><path d="M4 4l8 9M12 4l-8 9" stroke="#3b68b5" strokeWidth="2" /></>,
  rX: <><path d="M0 3h6v2H0zM0 7h7v3H0zM0 12h6v2H0z" fill="#888" /><path d="M6 3.500l9 9M15 3.500l-9 9" stroke="#c22" strokeWidth="2.200" /></>,
  rL: <><path d="M4 2h6v2H4zM9 7h7v3H9zM4 12h6v2H4z" fill="#999" /><path d="M8 8.500H3M4 5.500L.5 8.500l3.500 3z" stroke="#c22" fill="#c22" strokeWidth="1.300" /></>,
  rR: <><path d="M2 2h6v2H2zM0 7h7v3H0zM2 12h6v2H2z" fill="#999" /><path d="M8 8.500h5M12 5.500l3.500 3-3.500 3z" stroke="#c22" fill="#c22" strokeWidth="1.300" /></>,
  tYel: <><rect x=".5" y="1.500" width="15" height="13" fill="#fff" stroke="#777" /><path d="M1 2h14v5H1z" fill="#f3e54a" /><path d="M1 9.500h14M1 12h14M5.500 7v7M10.500 7v7M1 4.500h14" stroke="#999" /></>,
  tBlu: <><rect x=".5" y="1.500" width="15" height="13" fill="#fff" stroke="#889" /><path d="M1 4h14M1 7h14M1 10h14M1 13h14" stroke="#8f8fe0" strokeWidth="1.800" /><path d="M5.500 2v12M10.500 2v12" stroke="#fff" /></>,
  tPen: <><rect x=".5" y="1.500" width="15" height="13" fill="#e8e8e8" stroke="#999" /><path d="M6 14q6-2 6-11M9 9l6-6" stroke="#d6c020" strokeWidth="2.500" /></>,
  tHand: <><path d="M1.500 4.500h13v11h-13z" fill="#fff" stroke="#777" /><path d="M4 9.500h8M4 11.500h8M4 13.500h8" stroke="#777" />{hand}</>,
  excel: <><rect x="1" y="1" width="14" height="14" fill="#fff" stroke="#2d8a4a" strokeWidth="1.600" /><path d="M4 4l7 8M11 4l-7 8" stroke="#1d8a3a" strokeWidth="2.200" /></>,
  calc: <><path d="M2 3h13v9l-2 2H1z" fill="#5c5f66" stroke="#222" /><path d="M4 4.500h9v2.500H4z" fill="#b8c4c4" /><path d="M3 9h10M3 11.500h10" stroke="#eee" strokeDasharray="1.500 1" strokeWidth="1.500" /></>,
  abc: <><path d="M7.500 8V.5H16v5h-6" stroke="#333" fill="#fff" /><path d="M7 0h9v2H7z" fill="#2f4c86" /><text x="1" y="15" fontSize="9" fontStyle="italic" fontWeight="bold" fontFamily="Liberation Serif" fill="#222">ab=</text></>,
  data: <><path d="M1 3h5l1 2h5v8H1z" fill="#f0c030" stroke="#a67c10" strokeWidth=".8" /><path d="M6 1h10v5H6z" fill="#9cc3e6" /><path d="M6 1h10v1.500H6z" fill="#3c6ea5" /><circle cx="9" cy="8.500" r="3.500" fill="#e0f0fc" stroke="#28509c" strokeWidth="1.300" /><path d="M12 11l3 4" stroke="#a0522d" strokeWidth="2" /></>,
  show: <><path d="M1.500 3.500h12v11h-12z" fill="#fff" stroke="#2b58b0" strokeWidth="1.300" /><path d="M4 9h7M4 11h7M4 13h7" stroke="#2b58b0" />{hand}</>,
  views: <><path d="M7 1.500l3-1 3 8-3 1z" fill="#4b78c4" stroke="#28509c" strokeWidth=".8" /><path d="M1 12.500h12M2 14.500h12" stroke="#28509c" strokeWidth="1.800" /><path d="M8 6l-5 6M12 7q2 3 0 6" stroke="#28509c" strokeWidth="1.800" /></>,
  scale: <path d="M8 2v11M4 14h8M2 4q6-2 12 0M2.500 5L.5 9.500h5zM13 5l-2.500 4.500h5z" stroke="#6b5a20" fill="#d8b848" strokeWidth="1.300" />,
  microB: microscope,
  spectrum: (
    <>
      {["#c00", "#f80", "#dd0", "#0b0", "#0cc", "#00c"].map((c, i) => (
        <rect key={c} x="2" y={i * 2.6} width="6" height="2.6" fill={c} />
      ))}
      <path d="M2 0h6v15.500H2z" stroke="#222" strokeWidth=".7" />
      <path d="M10 2h5M10 5h5M10 8h5M10 11h5M10 14h5" stroke="#222" strokeWidth="1.300" />
    </>
  ),
  detail: <><path d="M0 3h10M0 6h6M0 9h5M0 12h6" stroke="#5b78b0" strokeWidth="1.600" /><circle cx="9.500" cy="8" r="3.800" fill="#e3eefb" stroke="#667fa8" strokeWidth="1.400" /><path d="M12 11l4 4" stroke="#556" strokeWidth="2.200" /></>,
};

const Icon = ({ n, s = 16 }: { n: string; s?: number }) => (
  <svg width={s} height={s} viewBox="0 0 16 16" fill="none">
    {icons[n]}
  </svg>
);

const Pin = () => (
  <svg width="9" height="10" viewBox="0 0 9 10" fill="none" stroke="#555b66">
    <path d="M2.500 1v5M6 1v5M2 1.500h4.500M.5 6.500h8M4.500 7v3M5.500 1v5" />
  </svg>
);
const Cross = ({ s = 9, c = "#6a707b", w = 1.2 }: { s?: number; c?: string; w?: number }) => (
  <svg width={s} height={s} viewBox="0 0 9 9" fill="none" stroke={c} strokeWidth={w}>
    <path d="M.5.5l8 8M8.500.5l-8 8" />
  </svg>
);
const Chevron = ({ d }: { d: "l" | "r" | "u" | "d" }) => (
  <svg width="8" height="8" viewBox="0 0 8 8" fill="none" stroke="#505050" strokeWidth="1.8">
    <path d={{ l: "M5.500 1L2.500 4l3 3", r: "M2.500 1l3 3-3 3", u: "M1 5.500l3-3 3 3", d: "M1 2.500l3 3 3-3" }[d]} />
  </svg>
);

/* ---------- toolbars ---------- */

type Item = [string, number?, ("on" | "dim")?];
const renderItems = (items: Item[]) =>
  items.map(([n, w = 22, st], i) => {
    if (n === "|") return <Sep key={i} $w={w === 22 ? 8 : w} />;
    if (n === "v") return <Drop key={i} $w={w} />;
    if (n === ":") return <Grip key={i} $w={w} />;
    if (n === "combo")
      return (
        <Combo key={i}>
          <ComboText>RF-BETON Flächen FA1 - Stahlbeton-Bemessung</ComboText>
          <ComboArrow>
            <Drop $w={10} />
          </ComboArrow>
        </Combo>
      );
    return (
      <Tool key={i} $w={w} $on={st === "on"} $dim={st === "dim"}>
        <Icon n={n} />
      </Tool>
    );
  });

const bar1: Item[] = [
  [":", 9], ["page"], ["open"], ["cabBrown"], ["cabBlue"], ["save"], ["note"], ["print"], ["preview"], ["|"],
  ["undo"], ["redo"], ["|"], ["para"], ["ell"], ["ring"], ["rectpm"], ["wins"], ["|"],
  ["list", 22, "on"], ["table", 22, "on"], ["|"], ["loadStar"], ["combo"],
  ["prev", 20], ["next", 22], ["eyeGrey", 23], ["xxGrey"], ["eye", 22, "on"], ["xx", 22, "on"], ["|"],
  ["glasses"], ["abacusWin"], ["abacus"], [":", 12], ["handGrid"], ["target"], ["pl1", 22, "on"], ["pl2"], ["pl3"],
  ["redGrid"], ["winAxis"], ["|"], ["shapes"], [":", 11], ["blueBox"], ["redHalf", 8],
];
const bar2: Item[] = [
  [":", 9], ["node"], ["v", 13], ["line"], ["lineI", 24], ["v", 12], ["poly", 23], ["v", 11], ["|", 7],
  ["support", 23], ["supports"], ["slabs"], ["|", 9], ["dim", 24], ["v", 10], ["cmt"], ["crop"], ["|"],
  ["surf", 26], ["v", 9], ["opening", 26], ["v", 8], ["member", 26], ["v", 9], ["solid", 24], ["boxes", 23], ["v", 11], ["|"],
  ["combine", 25], ["v", 9], ["nload"], ["loads", 23], ["loads"], ["sload"], ["gload", 24], ["v", 12], [":", 10],
  ["handDark", 23], ["zoomWin"], ["zoomX"], ["cube"], ["cubes"], ["|"], ["ax"], ["ay"], ["az", 23], ["amx", 24], ["v", 10],
  ["micro", 26], ["v", 8], ["|", 9], ["angle", 26], ["v", 8], [":", 12], ["frame"], ["gray", 24], ["|", 7],
  ["ibeam"], ["rainbow", 22, "on"], ["rcube"], ["react"],
];
const bar3: Item[] = [
  ["tTri", 22, "on"], ["tPlus"], ["tDown"], ["tDiag"], ["tWave", 22, "dim"], ["|"], ["tLeft"], ["tRight"], ["|"],
  ["goR", 22, "on"], ["goL", 22, "on"], ["sync", 22, "dim"], ["|"], ["mPlus", 22, "dim"], ["mX", 22, "dim"], ["mDots", 22, "dim"], ["|"],
  ["tX", 22, "dim"], ["|"], ["rX"], ["rL"], ["rR"], ["|"], ["tYel"], ["tBlu"], ["|"], ["tPen", 22, "dim"], ["|"],
  ["tHand"], ["glasses"], ["excel"], ["calc"], ["|"], ["abc", 18],
];

/* ---------- navigator ---------- */

const Iso = () => (
  <svg width="15" height="13" viewBox="0 0 15 13">
    <path d="M0 0h15v13H0z" fill="#000080" />
    <path d="M4 1h7l3 3v5l-3 3H4L1 9V4z" fill="#00d8f0" />
    <path d="M5 1.500h5l3 3v4l-3 3H5l-3-3v-4z" fill="#ffee00" />
    <path d="M5 5h1.500V4h2v1H10v3H8.500v1h-2V8H5z" fill="#f00000" />
  </svg>
);
const Glyph = ({ k }: { k: string }) => {
  if (k === "iso") return <Iso />;
  return (
    <svg width="15" height="13" viewBox="0 0 15 13" fill="none">
      {k === "bars" && <path d="M0 1h15v11H0z" fill="#c0c0c0" />}
      {k === "bars" && <path d="M0 3h15M0 10.500h15" stroke="#000080" strokeWidth="1.200" />}
      {k === "stir" && <path d="M0 2h15v9H0z" fill="#c0c0c0" />}
      {k === "stir" && <path d="M1.500 2v8M4.500 2v8M7.500 2v8M10.500 2v8M13.500 2v8M0 2.500h15" stroke="#000080" strokeWidth="1" />}
      {k === "def" && <path d="M4 2.500h7M4 3.500v8M11 3.500v8M3 2.500Q-.5 5 1 9M12 2.500q3 2 2 6" stroke="#000" strokeWidth="1.200" />}
      {k === "def" && <path d="M1 10h2M12 11h1M5 3.500h1M9 3.500h1" stroke="#d00" strokeWidth="1.200" />}
      {k === "xy" && <path d="M.5.500h14v12H.500z" fill="#fff" stroke="#aaa" />}
      {k === "xy" && <path d="M2.500 4.500l3 3M2.500 7.500l3-3M6 8.500l1 1" stroke="#401040" />}
      {k === "xy" && <path d="M6.500 8.500l4-4" stroke="#903030" />}
      {k === "xy" && <path d="M9.500 3l3 3M9.500 6l3-3" stroke="#206020" />}
      {k === "lag" && <path d="M1 7l2-2h1V1h3v4h1l1 2zM11 2.500h4M12.500 1.500v2M4.500 11.500h3M6 10v3" stroke="#0a7a30" fill="#0a7a30" strokeWidth=".9" />}
      {k === "note" && <path d="M.5.500h14v9H5L2.500 12.500V9.500h-2z" fill="#ffee00" stroke="#222" />}
      {k === "note" && <path d="M3 2.500h10M2 4.500h11M3 6.500h10" stroke="#222" strokeDasharray="1 1" />}
    </svg>
  );
};

type Node = { d: 0 | 1 | 2; t: string; s?: string; g?: string; open?: boolean; empty?: boolean; on?: boolean; last?: boolean; sel?: boolean };
const tree: Node[] = [
  { d: 0, t: "Längsbewehrung", g: "bars", sel: true },
  { d: 0, t: "Schubbewehrung", g: "stir" },
  { d: 0, t: "Bemessungsschnittgrößen" },
  { d: 0, t: "Gebrauchstauglichkeitsnachweise", open: true },
  { d: 1, t: "Ausnutzung" },
  { d: 1, t: "Verformungen", g: "def" },
  { d: 1, t: "Stahlspannung" },
  { d: 1, t: "Betonspannung" },
  { d: 1, t: "Rissbreite", open: true },
  { d: 2, t: "phi,w", s: "k,-z (oben)", g: "xy" },
  { d: 2, t: "phi,w", s: "k,+z (unten)", g: "xy" },
  { d: 2, t: "w", s: "k,I,-z (oben)" },
  { d: 2, t: "w", s: "k,II,-z (oben)" },
  { d: 2, t: "w", s: "k,I,+z (unten)" },
  { d: 2, t: "w", s: "k,II,+z (unten)", last: true },
  { d: 1, t: "Risstiefe", open: true },
  { d: 2, t: "φ,h", s: "w,-z, (oben)", g: "xy" },
  { d: 2, t: "φ,h", s: "w,+z, (unten)", g: "xy" },
  { d: 2, t: "h", s: "w,I,-z (oben)", on: true },
  { d: 2, t: "h", s: "w,II,-z (oben)" },
  { d: 2, t: "h", s: "w,I,+z (unten)" },
  { d: 2, t: "h", s: "w,II,+z (unten)", last: true },
  { d: 1, t: "Rissabstand" },
  { d: 1, t: "Grundschnittgrößen - nichtlinear" },
  { d: 1, t: "Lagerreaktionen - nichtlinear", g: "lag", empty: true, last: true },
  { d: 0, t: "Werte an Flächen", g: "note", empty: true, last: true },
];

const Tree = () => (
  <>
    {tree.map((n, i) => (
      <Row key={i}>
        {n.d > 0 && <Guide $v="full" />}
        {n.d > 1 && <Guide $v="full" />}
        <Guide $v={i === 0 ? "lower" : n.last ? "half" : "full"} $h>
          {n.d < 2 && <Expander $open={n.open} />}
        </Guide>
        {n.d < 2 ? <Check $filled={!n.empty} /> : <Radio $on={n.on} />}
        <Glyph k={n.g ?? "iso"} />
        <Label $sel={n.sel}>
          {n.t}
          {n.s && <Sub>{n.s}</Sub>}
        </Label>
      </Row>
    ))}
  </>
);

/* ---------- 3D view ---------- */

const slab =
  "M445 249L734 129C775 114 816 124 836 151C853 175 855 207 838 228Q827 241 806 252L516 374C470 387 430 374 408 343C388 313 400 268 445 249Z";
const mainRegion =
  "M468 238L478 242L496 243L510 253L522 266L566 247L567 235L578 221L600 212L620 206L643 208L662 209L711 188L708 182L715 168L733 160L743 146L757 137L787 135L800 151L817 180L833 208L835 222L826 230L818 231L800 226L775 220L757 223L736 233L697 245L703 247L720 254L734 259L741 257L752 246L766 237L785 237L797 243L808 256L870 262L870 100L468 100Z";
const pocket = "M552 311L578 298L581 305L576 314L564 319L555 316Z";
const bands: [number, string][] = [
  [36, "#0000ff"],
  [30, "#009cff"],
  [26, "#00e8f0"],
  [22, "#00e48c"],
  [18, "#10f010"],
  [14, "#ffff00"],
  [9, "#d2d200"],
  [6, "#ffa800"],
  [3, "#ff0000"],
];
const meshLines = (() => {
  const out: string[] = [];
  const ox = 516, oy = 270, ux = 12.5, uy = -5.3, vx = 6.05, vy = 10.5;
  for (let i = -14; i < 34; i++) out.push(`M${ox + i * ux - 14 * vx} ${oy + i * uy - 14 * vy}L${ox + i * ux + 20 * vx} ${oy + i * uy + 20 * vy}`);
  for (let j = -14; j < 20; j++) out.push(`M${ox - 16 * ux + j * vx} ${oy - 16 * uy + j * vy}L${ox + 34 * ux + j * vx} ${oy + 34 * uy + j * vy}`);
  return out.join("");
})();
const gridPoints: [number, number][] = [];
for (let i = -20; i < 20; i++)
  for (let j = -20; j < 20; j++) {
    const x = 445 + i * 48.2 + j * 24, y = 148 - i * 20 + j * 40.6;
    if (x > 305 && x < 922 && y > 109 && y < 516) gridPoints.push([Math.round(x), Math.round(y)]);
  }
const holes = [
  { out: "517,270 566,249 591,291 540,312", split: "532,295 578,275 586,291 540,309", green: "544,291 558,285 565,297 549,303" },
  { out: "660,210 711,189 736,232 684,252", split: "676,235 723,215 733,231 685,249", green: "687,230 703,223 710,236 697,242" },
];
const pads = [
  "827,236 838,226 842,238 833,245",
  "837,260 852,251 859,263 845,269",
  "839,288 855,278 861,290 848,295",
  "830,313 845,304 851,316 838,321",
  "809,331 824,322 830,334 817,341",
];

const Scene = () => (
  <svg width="623" height="410" viewBox="303 108 623 410" fill="none">
    <defs>
      <clipPath id="slabClip">
        <path d={slab} />
      </clipPath>
      <clipPath id="wallClip">
        <path d="M806 252Q838 238 851 205V282Q843 300 833 313L806 332Z" />
      </clipPath>
      {holes.map((h, i) => (
        <clipPath id={`hole${i}`} key={i}>
          <polygon points={h.out} />
        </clipPath>
      ))}
    </defs>
    {gridPoints.map(([x, y]) => (
      <rect key={`${x},${y}`} x={x} y={y} width="1" height="1" fill="#000" />
    ))}
    <path d="M362 108L445 249L303 308M784 108L734 129M516 374L601 518" stroke="#2d8080" />
    <path d="M511 380v76h10v-76z" fill="#b9b9b9" />
    <path d={slab} fill="#c4c4c4" transform="translate(0 18)" />
    <path d={slab} fill="#979797" transform="translate(-4 7)" />
    <path d="M806 240L860 200V300H806V262z" fill="#fcfcfc" />
    <path d="M806 252Q838 238 851 205V282Q843 300 833 313L806 332Z" fill="#dadada" />
    <path d="M842 226L851 205V275l-9-35z" fill="#a0a0a0" />
    <path
      clipPath="url(#wallClip)"
      d="M817 240V330M828 230V330M838 220V320M846 210V310M806 262l45-25M806 271l45-25M806 280l45-25M806 289l45-25M806 298l45-25M806 307l45-25M806 316l45-25M806 325l45-25M806 334l45-25"
      stroke="#b4b4b4"
      strokeDasharray="4 1.500"
    />
    {pads.map((p) => (
      <polygon key={p} points={p} fill="#1fd81f" fillOpacity=".82" />
    ))}
    <path d="M806 252V332M851 205v75" stroke="#666" />
    <path d="M804 254v12l4 3v-15z" fill="#a44" fillOpacity=".6" />
    <g clipPath="url(#slabClip)">
      <path d={slab} fill="#0000a0" />
      {bands.map(([w, c]) => (
        <g key={c} strokeLinejoin="round">
          <path d={mainRegion} stroke="#602060" strokeOpacity=".75" strokeWidth={w + 1} />
          <path d={pocket} stroke="#602060" strokeOpacity=".75" strokeWidth={w + 1} />
          <path d={mainRegion} stroke={c} strokeWidth={w} />
          <path d={pocket} stroke={c} strokeWidth={w} />
        </g>
      ))}
      <path d={mainRegion} fill="#be0000" />
      <path d={pocket} fill="#be0000" />
      <path d="M736 234L757 226L775 222L800 227L818 233L830 226L836 224L808 253L797 244L785 238L766 238L752 246L742 253L755 238L773 228L742 235Z" fill="#ffa800" />
      <path d="M740 240L770 229L752 238L738 256M795 231l9 8 12-3" stroke="#a03000" strokeWidth=".8" />
      <path d={meshLines} stroke="#aaa6b4" strokeWidth=".9" strokeDasharray="5 1.500" />
    </g>
    <path d={slab} stroke="#111" strokeWidth="1" />
    {holes.map((h, i) => (
      <g key={i}>
        <polygon points={h.out} fill="#d6d6d6" />
        <path d={meshLines} stroke="#b9b9b9" strokeWidth=".8" strokeDasharray="4 1.500" clipPath={`url(#hole${i})`} />
        <polygon points={h.split} fill="#fff" />
        <polygon points={h.green} fill="#28dc28" />
        <polygon points={h.out} stroke="#101010" strokeWidth="3.200" />
        <polygon points={h.out} stroke="#107a7a" strokeWidth="2" />
      </g>
    ))}
    {[[734, 129], [796, 126], [843, 160], [806, 252], [408, 343], [806, 332], [847, 293]].map(([x, y]) => (
      <rect key={`${x}${y}`} x={x - 1.5} y={y - 1.5} width="3" height="3" fill="#a01010" />
    ))}
    <path d="M445 249l26-11" stroke="#f00" strokeWidth="1.600" />
    <path d="M470 236h10l-8 5z" fill="#c00000" />
    <path d="M445 250v16" stroke="#00f" strokeWidth="1.400" />
    <path d="M445 250l13 24" stroke="#0d0" strokeWidth="2" />
    <path d="M455 275l5-3 4 10z" fill="#00c800" />
    <polygon points="488,462 527,447 544,478 507,494" fill="#3fde3f" />
    <circle cx="516" cy="459" r="10" fill="#16f016" />
    <path d="M511 378v76q5 5 10 0v-76z" fill="#a9a9a9" fillOpacity=".85" />
    <path d="M515 378v77h3v-77z" fill="#d5d5d5" fillOpacity=".8" />
    <path d="M511 449h10v6q-5 4-10 0z" fill="#8a7d72" />
    <path d="M511 372l8-1 2 4-5 3-4-2z" fill="#e01818" />
    <rect x="515" y="473" width="1" height="1" fill="#000" />
    <path d="M359 438L389 425" stroke="#f00" strokeWidth="1.500" />
    <path d="M386 424l10-2-8 6z" fill="#b00000" />
    <path d="M359 438v17" stroke="#00f" strokeWidth="1.800" />
    <path d="M356 453h6l-3 7z" fill="#0000d0" />
    <path d="M359 438L372 460" stroke="#0e0" strokeWidth="1.500" />
    <path d="M370 462l5-3 2 9z" fill="#00b400" />
    <g fontFamily="Liberation Sans" fontSize="9">
      <text x="401" y="423" fill="#f00">X</text>
      <text x="356" y="469" fill="#00f">Z</text>
      <text x="378" y="480" fill="#0d0">Y</text>
      <text x="464" y="291" fill="#3c3" fontSize="8">Y</text>
    </g>
    <path d="M487 229l3 3M491 229l-3 3" stroke="#f00" strokeWidth=".8" />
    <g fontFamily="Liberation Sans" fontSize="11" fill="#000">
      <text x="308" y="125" textLength="145">Risstiefe h-w,I,-z (oben) [mm]</text>
      <text x="308" y="139" textLength="240">RF-BETON Flächen FA1 - Stahlbeton-Bemessung</text>
      <text x="308" y="510" textLength="291">Max h-w,I,-z (oben): 180.000, Min h-w,I,-z (oben): 0.000 mm</text>
    </g>
  </svg>
);

/* ---------- data ---------- */

const menu: [string, number, number][] = [
  ["Datei", 0, 42], ["Bearbeiten", 9, 71], ["Ansicht", 0, 53], ["Einfügen", 0, 62], ["Berechnung", 2, 78], ["Ergebnisse", 3, 71],
  ["Extras", 1, 45], ["Tabelle", 0, 51], ["Optionen", 0, 65], ["Zusatzmodule", 0, 87], ["Fenster", 0, 53], ["Hilfe", 0, 40],
];
const rows: [string, string, string][] = [
  ["0.000", "0.000", "0.000"], ["6.000", "0.000", "0.000"], ["0.000", "3.000", "0.000"], ["6.000", "3.000", "0.000"],
  ["0.000", "0.000", "2.800"], ["6.000", "0.000", "2.800"], ["0.000", "3.000", "2.800"],
];
const sheets: [string, number][] = [
  ["Knoten", 43], ["Linien", 38], ["Materialien", 61], ["Flächen", 48], ["Volumenkörper", 81], ["Öffnungen", 60],
  ["Knotenlager", 67], ["Linienlager", 61], ["Flächenlager", 71],
];
const legend: [string, string][] = [
  ["180.000", "#be0000"], ["163.636", "#ff0000"], ["147.273", "#ffa800"], ["130.909", "#d2d200"], ["114.545", "#ffff00"],
  ["98.182", "#00ff00"], ["81.818", "#00e48c"], ["65.455", "#00f5f5"], ["49.091", "#009cff"], ["32.727", "#0000ff"], ["16.364", "#0000a0"],
];

const DataTable = () => (
  <Table>
    <Corner>
      Knoten
      <br />
      Nr.
    </Corner>
    {"ABCDEFG".split("").map((c) =>
      c === "A" ? <Blue key={c} $k="letter">A</Blue> : <Cell key={c} $k="letter">{c}</Cell>,
    )}
    <Cell $k="head" />
    <Cell $k="head">Bezug</Cell>
    <Cell $k="head">Koordinaten-</Cell>
    <KoordHead $k="head">Knotenkoordinaten</KoordHead>
    <Cell $k="head" />
    {["Knotentyp", "knoten", "system", "X [m]", "Y [m]", "Z [m]", "Kommentar"].map((h) => (
      <HeadBottom key={h} $k="head">{h}</HeadBottom>
    ))}
    {rows.map((r, i) => (
      <React.Fragment key={i}>
        {i === 0 ? <Blue $k="num">1</Blue> : <Cell $k="num">{i + 1}</Cell>}
        <Cell $k={i === 0 ? "sel" : undefined}>Standard</Cell>
        <Cell $a="center">0</Cell>
        <Cell>
          <u>K</u>artesisch
        </Cell>
        {r.map((v, j) => (
          <Cell key={j} $a="right">{v}</Cell>
        ))}
        <Cell />
      </React.Fragment>
    ))}
  </Table>
);

export default function App() {
  return (
    <Window>
      <Global />
      <TitleBar>
        <svg width="17" height="16" viewBox="0 0 17 16" fill="none">
          <path d="M5 3l7-3 4 3v7l-5 4-6-4z" fill="#6b88ac" stroke="#3a4c66" strokeWidth=".8" />
          <path d="M5 3l6 3 5-3M11 6v8" stroke="#c9d7e8" strokeWidth=".8" />
          <text x="1" y="14.500" fontSize="11" fontWeight="bold" fontFamily="Liberation Sans" fill="#f2c81c" stroke="#6a5200" strokeWidth=".5">5</text>
        </svg>
        <TitleText>RFEM 5.20.01 x64 - [RFEM-Beispiel-04]</TitleText>
        <CaptionButtons>
          <svg width="10" height="11" stroke="#000"><path d="M0 5.500h10" /></svg>
          <svg width="10" height="10" stroke="#000" fill="none"><path d="M.5.500h9v9H.500z" /></svg>
          <Cross s={10} c="#000" w={1} />
        </CaptionButtons>
      </TitleBar>
      <MenuBar>
        <Grip $w={5} />
        <svg width="16" height="13" viewBox="0 0 16 13" fill="none">
          <path d="M0 0h16v13H0z" fill="#1d2a6b" />
          <path d="M0 8.500h16M5 2v9M10 2v9M0 7.500l5-5M10 2.500l6 5M5 3v5M10 3l2 5" stroke="#fff" strokeWidth=".9" />
        </svg>
        <MenuGap />
        {menu.map(([t, u, w]) => (
          <MenuItem key={t} $w={w}>
            {t.slice(0, u)}
            <u>{t[u]}</u>
            {t.slice(u + 1)}
          </MenuItem>
        ))}
        <MdiButtons>
          <svg width="9" height="9" stroke="#777" strokeWidth="2"><path d="M1 8h7" /></svg>
          <svg width="10" height="9" stroke="#777" fill="none"><path d="M2.500 1.500h7v4M.5 3.500h7v4h-7z" /></svg>
          <Cross s={9} c="#777" w={1.8} />
        </MdiButtons>
      </MenuBar>
      <Bar>{renderItems(bar1)}</Bar>
      <Bar>{renderItems(bar2)}</Bar>
      <Main>
        <Nav>
          <PanelHead $bg="#e1e7f2" $h={20} $pr={5}>
            Projekt-Navigator - Ergebnisse
            <Grow />
            <Pin />
            <Cross />
          </PanelHead>
          <TreeArea>
            <Tree />
            <Highlight />
          </TreeArea>
          <HScroll>
            <Chevron d="l" />
            <HThumb />
            <Chevron d="r" />
          </HScroll>
          <NavTabs>
            <NavTab $w={60}><Icon n="data" />Daten</NavTab>
            <NavTab $w={66}><Icon n="show" />Zeigen</NavTab>
            <NavTab $w={81}><Icon n="views" />Ansichten</NavTab>
            <NavTab $w={79} $on><Icon n="rainbow" s={15} />Ergebnisse</NavTab>
          </NavTabs>
        </Nav>
        <Center>
          <View>
            <Scene />
          </View>
          <TableHead>
            <PanelHead $bg="#bcc2cd" $h={19} $pr={7}>
              1.1 Knoten
              <Grow />
              <Pin />
              <Cross />
            </PanelHead>
          </TableHead>
          <Bar $h={25} $start={9}>{renderItems(bar3)}</Bar>
          <Grid>
            <DataTable />
            <VScroll>
              <Chevron d="u" />
              <VThumb />
              <Chevron d="d" />
            </VScroll>
          </Grid>
          <SheetTabs>
            {sheets.map(([t, w], i) => (
              <Sheet key={t} $w={w} $on={i === 0}>{t}</Sheet>
            ))}
            <Grow />
            {["M3 1v8M8 1L4.500 5l3.500 4z", "M7 1L3.500 5l3.500 4z", "M3 1l3.500 4-3.500 4z", "M2 1l3.500 4L2 9zM8 1v8"].map((d, i) => (
              <PageButton key={d}>
                <svg width="10" height="10" fill={i < 2 ? "#a0a0a0" : "#000"} stroke={i < 2 ? "#a0a0a0" : "#000"}><path d={d} /></svg>
              </PageButton>
            ))}
          </SheetTabs>
          <Filler />
        </Center>
        <Side>
          <PanelHead $bg="#bcc2cd" $h={20}>
            Panel
            <Grow />
            <Pin />
            <Cross />
          </PanelHead>
          <SideBody>
            <SideLine>Risstiefe</SideLine>
            <SideLine>
              h<Sub>w,I,-z (oben)</Sub> [mm]
            </SideLine>
            <Legend>
              <Swatches>
                {legend.map(([v, c]) => (
                  <Swatch key={v} $c={c} />
                ))}
              </Swatches>
              <Values>
                {legend.map(([v]) => (
                  <Value key={v}>{v}</Value>
                ))}
                <Value>0.000</Value>
              </Values>
            </Legend>
            <MinMax>
              <MinMaxRow><span>Max</span><span>:</span><span>180.000</span></MinMaxRow>
              <MinMaxRow><span>Min</span><span>:</span><span>0.000</span></MinMaxRow>
            </MinMax>
            <PushButton>RF-BETON Flächen</PushButton>
            <DetailButton><Icon n="detail" /></DetailButton>
          </SideBody>
          <SideTabs>
            <SideTab $on><Icon n="spectrum" /></SideTab>
            <SideTab><Icon n="scale" /></SideTab>
            <SideTab><Icon n="microB" /></SideTab>
          </SideTabs>
        </Side>
      </Main>
      <Status>
        <StatusCell $w={37}>FANG</StatusCell>
        <StatusCell $w={47}>RASTER</StatusCell>
        <StatusCell $w={50}>KARTES</StatusCell>
        <StatusCell $w={45}>OFANG</StatusCell>
        <StatusCell $w={49}>HLINIEN</StatusCell>
        <StatusCell $w={28}>DXF</StatusCell>
        <StatusTick $w={189} />
        <StatusTick $w={88} />
        <StatusTick $w={88} />
        <StatusTick $w={88} />
      </Status>
    </Window>
  );
}
